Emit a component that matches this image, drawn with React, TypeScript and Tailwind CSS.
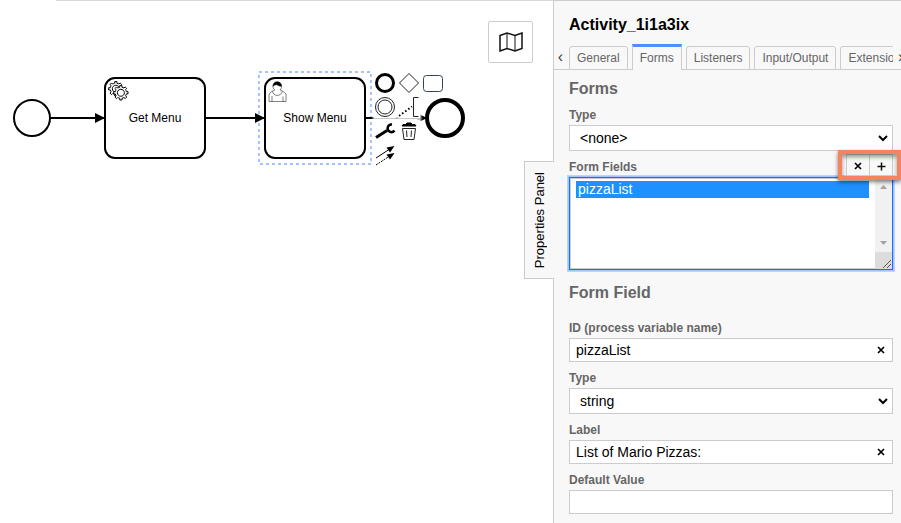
import type { ReactNode } from "react";

const GEAR =
  "v -1.71335 c 0.352326,-0.0705 0.703932,-0.17838 1.047628,-0.32133 0.344416,-0.14465 0.665822,-0.32133 0.966377,-0.52145 l 1.19431,1.18005 1.567487,-1.57688 -1.195028,-1.18014 c 0.403376,-0.61394 0.683079,-1.29908 0.825447,-2.01824 l 1.622133,-0.01 v -2.2196 l -1.636514,0.01 c -0.07333,-0.35153 -0.178319,-0.70024 -0.323564,-1.04372 -0.145244,-0.34406 -0.321407,-0.6644 -0.522735,-0.96217 l 1.131035,-1.13631 -1.583305,-1.56293 -1.129598,1.13589 c -0.614052,-0.40108 -1.302883,-0.68093 -2.022633,-0.82247 l 0.0093,-1.61852 h -2.241173 l 0.0042,1.63124 c -0.353763,0.0736 -0.705369,0.17977 -1.049785,0.32371 -0.344415,0.14437 -0.665102,0.32092 -0.9635006,0.52006 l -1.1698628,-1.15823 -1.5667691,1.5792 1.1684265,1.15669 c -0.4026573,0.61283 -0.68308,1.29797 -0.8247287,2.01713 l -1.6588041,0.003 v 2.22174 l 1.6724648,-0.006 c 0.073327,0.35077 0.1797598,0.70243 0.3242851,1.04472 0.1452428,0.34448 0.3214064,0.6644 0.5227339,0.96066 l -1.1993431,1.19723 1.5840256,1.56011 1.1964668,-1.19348 c 0.6140517,0.40346 1.3028827,0.68232 2.0233517,0.82331 l 7.19e-4,1.69892 h 2.226848 z m 0.221462,-3.9957 c -1.788948,0.7502 -3.8576,-0.0928 -4.6097055,-1.87438 -0.7521065,-1.78321 0.090598,-3.84627 1.8802645,-4.59604 1.78823,-0.74936 3.856881,0.0929 4.608987,1.87437 0.752106,1.78165 -0.0906,3.84612 -1.879546,4.59605 z";

function ServiceMarker() {
  return (
    <g fill="#fff" stroke="#000" strokeWidth="1">
      <path d={"m 12,18 " + GEAR} />
      <circle cx="16" cy="16" r="4" stroke="none" />
      <path d={"m 17,22 " + GEAR} />
    </g>
  );
}

function UserMarker() {
  return (
    <g fill="#fff" stroke="#000" strokeWidth="0.5">
      <path d="m 15,12 c 0.909,-0.845 1.594,-2.049 1.594,-3.385 0,-2.554 -1.805,-4.622 -4.357,-4.622 -2.552,0 -4.288,2.068 -4.288,4.622 0,1.348 0.974,2.562 1.896,3.405 -0.529,0.187 -5.669,2.097 -5.794,4.756 v 6.718 h 17 v -6.718 c 0,-2.298 -5.528,-4.59 -6.051,-4.775 z m -8,6 l 0,5.5 m 11,0 l 0,-5" />
      <path d="m 15,12 m 2.162,1.009 c 0,2.447 -2.158,4.431 -4.821,4.431 -2.665,0 -4.822,-1.981 -4.822,-4.431" />
      <path
        fill="#000"
        d="M 8.1,8.2 c 0,0 2.25,-2.358 4.27,-1.177 2.024,1.181 4.221,1.537 4.124,0.965 -0.098,-0.57 -0.117,-3.791 -4.191,-4.136 -3.574,0.001 -4.3,3.2 -4.203,4.348 z"
      />
    </g>
  );
}

function Task({ x, name, children }: { x: number; name: string; children: ReactNode }) {
  return (
    <g transform={`translate(${x} 78)`}>
      <rect width="100" height="80" rx="10" fill="#fff" stroke="#000" strokeWidth="2" />
      {children}
      <text x="50" y="44" textAnchor="middle" fontSize="12">
        {name}
      </text>
    </g>
  );
}

function Diagram() {
  return (
    <svg className="block w-full h-full" role="img" aria-label="Process diagram">
      <defs>
        <marker id="arrow" viewBox="0 0 20 20" refX="11" refY="10" markerWidth="10" markerHeight="10" orient="auto">
          <path d="M 1 5 L 11 10 L 1 15 Z" />
        </marker>
      </defs>
      <rect x="259" y="72" width="112" height="92" fill="none" stroke="#a3c4ff" strokeWidth="2" strokeDasharray="3 3" />
      <g stroke="#000" strokeWidth="2">
        <path d="M50 118H105" markerEnd="url(#arrow)" />
        <path d="M205 118H265" markerEnd="url(#arrow)" />
        <path d="M365 118H427" markerEnd="url(#arrow)" />
      </g>
      <circle cx="32" cy="118" r="18" fill="#fff" stroke="#000" strokeWidth="2" />
      <circle cx="445" cy="118" r="18" fill="#fff" stroke="#000" strokeWidth="4" />
      <Task x={105} name="Get Menu">
        <ServiceMarker />
      </Task>
      <Task x={265} name="Show Menu">
        <UserMarker />
      </Task>
    </svg>
  );
}

type PadEntry = { title: string; icon: ReactNode } | null;

const padEntries: PadEntry[] = [
  { title: "Append end event", icon: <circle cx="11" cy="11" r="8.5" stroke="#000" strokeWidth="3" /> },
  { title: "Append gateway", icon: <path d="M11 1.5L20.5 11L11 20.5L1.5 11Z" /> },
  { title: "Append task", icon: <rect x="1.5" y="3.5" width="19" height="16" rx="3" stroke="#345" /> },
  {
    title: "Append intermediate event",
    icon: (
      <>
        <circle cx="11" cy="11" r="9.5" />
        <circle cx="11" cy="11" r="7" />
      </>
    ),
  },
  {
    title: "Append text annotation",
    icon: (
      <>
        <path d="M20.5 1.5H15.5V20.5H20.5" />
        <path d="M1 20L14 10.5" stroke="#000" strokeWidth="2" strokeDasharray="1.6 2.2" />
      </>
    ),
  },
  null,
  {
    title: "Change type",
    icon: (
      <g stroke="#000">
        <path d="M2 17.5L13 10.5" strokeWidth="3" />
        <path d="M18 4.5A3.8 3.8 0 1 0 20.5 10.5" strokeWidth="2.5" />
      </g>
    ),
  },
  {
    title: "Remove",
    icon: (
      <>
        <path d="M4 6L5 4.5H7.5L9 3H13L14.5 4.5H17L18 6Z" fill="#000" stroke="#000" />
        <path d="M4.5 8.5H17.5L16 19.5H6Z" />
        <path d="M8.5 10.5L9 17M13.5 10.5L13 17" />
      </>
    ),
  },
  null,
  {
    title: "Connect",
    icon: (
      <g stroke="#000">
        <path d="M2 14L15 5.5" />
        <path d="M2 21L15 12.5" strokeDasharray="2 1" />
        <path d="M20.5 2L16 8.5L12.5 3.5ZM20.5 9L16 15.5L12.5 10.5Z" fill="#000" stroke="none" />
      </g>
    ),
  },
];

function ContextPad() {
  return (
    <div className="absolute left-[374px] top-[72px] grid grid-cols-3 gap-[2px]">
      {padEntries.map((e, i) =>
        e ? (
          <button key={i} type="button" title={e.title} className="size-[22px] bg-white shadow-[0_0_2px_1px_#fff]">
            <svg viewBox="0 0 22 22" className="size-[22px]" fill="none" stroke="#222" strokeWidth="1">
              {e.icon}
            </svg>
          </button>
        ) : (
          <span key={i} />
        ),
      )}
    </div>
  );
}

function Cross() {
  return (
    <svg viewBox="0 0 8 8" className="size-2" stroke="#000" strokeWidth="1.7" aria-hidden="true">
      <path d="M1 1L7 7M7 1L1 7" />
    </svg>
  );
}

const labelClass = "block mb-[2px] text-xs leading-4 font-bold text-[#666]";

function TextRow({ id, label, value, clearable }: { id: string; label: string; value: string; clearable?: boolean }) {
  return (
    <div>
      <label htmlFor={id} className={labelClass}>
        {label}
      </label>
      <div className="flex h-6 items-center border border-[#ccc] bg-white">
        <input id={id} defaultValue={value} className="min-w-0 flex-1 bg-transparent px-[6px] text-sm leading-5 text-black outline-none" />
        {clearable && (
          <button type="button" aria-label={"Clear " + label} className="flex h-full w-[23px] items-center justify-center">
            <Cross />
          </button>
        )}
      </div>
    </div>
  );
}

function SelectRow({ id, label, value }: { id: string; label: string; value: string }) {
  return (
    <div>
      <label htmlFor={id} className={labelClass}>
        {label}
      </label>
      <div className="grid">
        <select
          id={id}
          className="col-start-1 row-start-1 h-[26px] w-full appearance-none rounded-none border border-[#ccc] bg-white px-[10px] text-sm leading-5 text-black"
        >
          <option>{value}</option>
        </select>
        <svg
          viewBox="0 0 10 8"
          className="pointer-events-none col-start-1 row-start-1 mr-[5px] h-2 w-[10px] self-center justify-self-end"
          fill="none"
          stroke="#000"
          strokeWidth="2"
          aria-hidden="true"
        >
          <path d="M1 2L5 6L9 2" />
        </svg>
      </div>
    </div>
  );
}

function Tab({ children, active }: { children: string; active?: boolean }) {
  return (
    <button
      type="button"
      role="tab"
      aria-selected={!!active}
      className={
        active
          ? "h-[26px] shrink-0 border-x border-t-[3px] border-x-[#ccc] border-t-[#4d90ff] bg-[#f8f8f8] px-[7px] pb-[2px] text-xs text-[#666]"
          : "h-6 shrink-0 rounded-t-[3px] border border-[#ccc] bg-[#f8f8f8] px-[7px] text-xs text-[#666]"
      }
    >
      {children}
    </button>
  );
}

function ScrollTrack() {
  return (
    <div className="flex w-[17px] flex-col justify-between bg-[#f1f1f1]" aria-hidden="true">
      <svg viewBox="0 0 17 17" className="size-[17px]" fill="#a3a3a3">
        <path d="M5 11L8.5 7L12 11Z" />
      </svg>
      <div>
        <svg viewBox="0 0 17 17" className="block size-[17px]" fill="#a3a3a3">
          <path d="M5 6L8.5 10L12 6Z" />
        </svg>
        <svg viewBox="0 0 17 17" className="block size-[17px] bg-[#dcdcdc]" stroke="#555" strokeWidth="1">
          <path d="M8 16L16 8M12 16L16 12" />
        </svg>
      </div>
    </div>
  );
}

function PropertiesPanel() {
  return (
    <aside className="relative w-[348px] shrink-0 border-l border-[#ccc] bg-[#f8f8f8]">
      <button
        type="button"
        className="absolute -left-[30px] top-[160px] flex h-[118px] w-[30px] items-center justify-center border border-r-0 border-[#ccc] bg-[#f8f8f8] text-[13px] leading-4 text-black"
      >
        <span className="rotate-180 [writing-mode:vertical-rl]">Properties Panel</span>
      </button>

      <h1 className="px-[15px] pt-[14px] text-base leading-5 font-bold text-black">Activity_1i1a3ix</h1>

      <div className="mt-[9px] flex h-[26px] overflow-hidden shadow-[inset_0_-1px_0_#ccc]">
        <button type="button" aria-label="Scroll tabs left" className="flex w-[15px] shrink-0 items-center justify-center pr-[2px] text-base leading-4 text-[#444]">
          ‹
        </button>
        <div role="tablist" className="flex min-w-0 flex-1 items-end gap-1 overflow-hidden">
          <Tab>General</Tab>
          <Tab active>Forms</Tab>
          <Tab>Listeners</Tab>
          <Tab>Input/Output</Tab>
          <Tab>Extensions</Tab>
        </div>
        <button type="button" aria-label="Scroll tabs right" className="flex w-2 shrink-0 items-center overflow-hidden pl-[5px] text-base leading-4 text-[#444]">
          ›
        </button>
      </div>

      <div className="pt-[9px] pr-2 pb-2 pl-[15px]">
        <h2 className="mb-2 text-base leading-5 font-bold text-[#666]">Forms</h2>
        <div className="flex flex-col gap-2">
          <SelectRow id="form-type" label="Type" value="<none>" />
          <div className="relative">
            <label htmlFor="form-fields" className={labelClass}>
              Form Fields
            </label>
            <div className="absolute -top-[5px] right-0 flex h-6 w-[47px] border border-[#ccc]">
              <button type="button" aria-label="Remove form field" className="flex flex-1 items-center justify-center border-r border-[#ccc]">
                <Cross />
              </button>
              <button type="button" aria-label="Add form field" className="flex flex-1 items-center justify-center">
                <svg viewBox="0 0 9 9" className="size-[9px]" stroke="#111" strokeWidth="1.5" aria-hidden="true">
                  <path d="M0.5 4.5H8.5M4.5 0.5V8.5" />
                </svg>
              </button>
            </div>
            <div className="flex h-[93px] border border-[#1a6dff] bg-white shadow-[0_0_0_1px_#a3c4ff,0_0_0_2px_#bcd4ff]">
              <select
                id="form-fields"
                size={5}
                defaultValue="pizzaList"
                className="min-w-0 flex-1 appearance-none overflow-hidden border-y border-l border-[#ccc] bg-white py-[2px] pr-[6px] pl-[5px] text-sm leading-[17px] outline-none"
              >
                <option className="h-[17px] min-h-[17px] px-[2px] py-0 checked:bg-[linear-gradient(#1e90ff,#1e90ff)] checked:[-webkit-text-fill-color:#fff]">
                  pizzaList
                </option>
              </select>
              <ScrollTrack />
            </div>
            <div className="pointer-events-none absolute -top-[9px] -right-2 h-[30px] w-[63px] border-4 border-[#f4845f] shadow-[0_2px_4px_rgba(0,0,0,0.5),inset_0_3px_4px_rgba(0,0,0,0.4)]" />
          </div>
        </div>

        <h2 className="mt-[13px] mb-[17px] text-base leading-5 font-bold text-[#666]">Form Field</h2>
        <div className="flex flex-col gap-2">
          <TextRow id="field-id" label="ID (process variable name)" value="pizzaList" clearable />
          <SelectRow id="field-type" label="Type" value="string" />
          <TextRow id="field-label" label="Label" value="List of Mario Pizzas:" clearable />
          <TextRow id="field-default" label="Default Value" value="" />
        </div>
      </div>
    </aside>
  );
}

export default function App() {
  return (
    <div className="flex min-h-screen overflow-hidden bg-white font-['Liberation_Sans',Arial,sans-serif]">
      <main className="relative min-w-0 flex-1">
        <div className="absolute inset-x-0 top-0 ml-14 border-t border-[#d8d8d8]" />
        <div className="absolute inset-0">
          <Diagram />
        </div>
        <ContextPad />
        <button
          type="button"
          title="Open minimap"
          className="absolute top-[21px] right-5 flex h-[42px] w-[45px] items-center justify-center rounded-xs border border-[#ccc] bg-white"
        >
          <svg viewBox="0 0 24 20" className="h-5 w-6" fill="none" stroke="#111" strokeWidth="1.5">
            <path d="M1 3.5L8 1L16 3.5L23 1V16.5L16 19L8 16.5L1 19Z" />
            <path d="M8 1V16.5M16 3.5V19" strokeWidth="1" />
          </svg>
        </button>
      </main>
      <div className="flex border-t border-[#ccc]">
        <PropertiesPanel />
      </div>
    </div>
  );
}
